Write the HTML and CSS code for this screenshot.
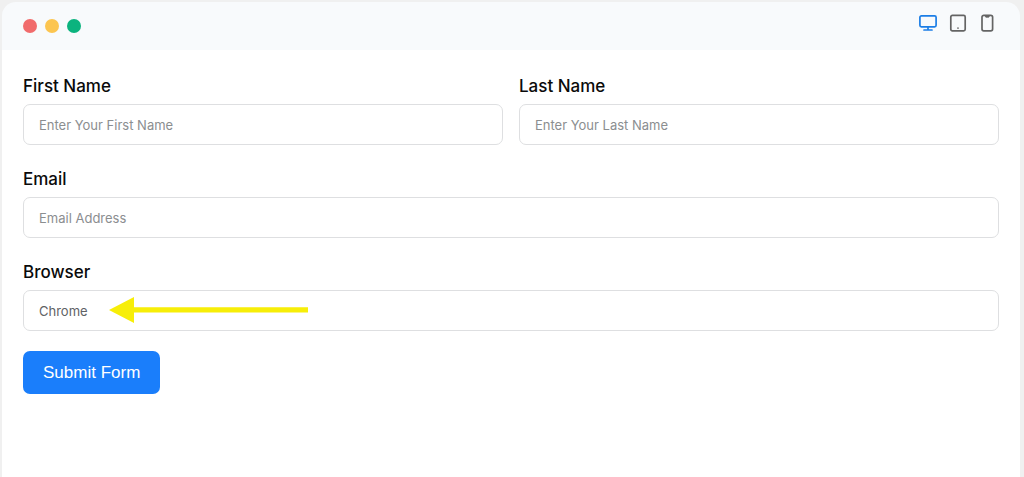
FILE: index.html
```html
<!DOCTYPE html>
<html lang="en">
<head>
<meta charset="utf-8">
<meta name="viewport" content="width=device-width, initial-scale=1">
<title>Form preview</title>
<link rel="stylesheet" href="styles.css">
</head>
<body>
<main class="preview">
  <header class="toolbar">
    <div class="dots" aria-hidden="true">
      <span class="dot dot-red"></span>
      <span class="dot dot-yellow"></span>
      <span class="dot dot-green"></span>
    </div>
    <div class="devices">
      <button class="device device-active" type="button" aria-label="Desktop">
        <svg width="20" height="20" viewBox="0 0 20 20" fill="none" stroke="currentColor" stroke-width="1.7" stroke-linecap="round" stroke-linejoin="round"><rect x="1.9" y="2.8" width="16.2" height="11" rx="1.5"/><path d="M10 14v3M6 17h8"/></svg>
      </button>
      <button class="device" type="button" aria-label="Tablet">
        <svg width="20" height="20" viewBox="0 0 20 20" fill="none" stroke="currentColor" stroke-width="1.7" stroke-linecap="round" stroke-linejoin="round"><rect x="2.8" y="2.3" width="14.4" height="15.6" rx="1.6"/><path d="M10 15v.1"/></svg>
      </button>
      <button class="device" type="button" aria-label="Phone">
        <svg width="20" height="20" viewBox="0 0 20 20" fill="none" stroke="currentColor" stroke-width="1.7" stroke-linecap="round" stroke-linejoin="round"><rect x="4" y="2.3" width="10.6" height="15.6" rx="1.8"/><path d="M7.1 2.8l.7 1.4h3l.7-1.4z" fill="currentColor" stroke-width=".8"/></svg>
      </button>
    </div>
  </header>
  <form class="form">
    <div class="row">
      <div class="field">
        <label class="label" for="first">First Name</label>
        <input class="input" id="first" type="text" placeholder="Enter Your First Name">
      </div>
      <div class="field">
        <label class="label" for="last">Last Name</label>
        <input class="input" id="last" type="text" placeholder="Enter Your Last Name">
      </div>
    </div>
    <div class="field">
      <label class="label" for="email">Email</label>
      <input class="input" id="email" type="email" placeholder="Email Address">
    </div>
    <div class="field">
      <label class="label" for="browser">Browser</label>
      <div class="control">
        <input class="input" id="browser" type="text" value="Chrome">
        <svg class="arrow" width="200" height="26" viewBox="0 0 200 26" aria-hidden="true"><path d="M0 13L25 0v10.2h174v5.2H25V26z" fill="#f7ee08"/></svg>
      </div>
    </div>
    <button class="submit" type="button">Submit Form</button>
  </form>
</main>
</body>
</html>
```
FILE: styles.css
```css
* {
  box-sizing: border-box;
}

body {
  margin: 0;
  background: #f0f0f0;
  font-family: Inter, "Liberation Sans", sans-serif;
}

.preview {
  min-height: 100vh;
  margin: 0 4px 0 2px;
  padding-top: 2px;
}

.toolbar {
  display: flex;
  align-items: center;
  justify-content: space-between;
  height: 48px;
  padding: 0 22px 0 21px;
  background: #f8fafc;
  border-radius: 14px 14px 0 0;
}

.dots {
  display: flex;
  gap: 8px;
}

.dot {
  width: 14px;
  height: 14px;
  border-radius: 50%;
}

.dot-red {
  background: #f16b6c;
}

.dot-yellow {
  background: #fcc550;
}

.dot-green {
  background: #0bb37e;
}

.devices {
  display: flex;
  gap: 10px;
  padding-bottom: 6px;
}

.device {
  display: flex;
  padding: 0;
  border: 0;
  background: none;
  color: #646464;
}

.device-active {
  color: #1c7ee6;
}

.form {
  display: flex;
  flex-direction: column;
  gap: 22px;
  min-height: calc(100vh - 50px);
  padding: 24px 21px;
  background: #fff;
}

.row {
  display: grid;
  grid-template-columns: 1fr 1fr;
  gap: 16px;
}

.field {
  display: flex;
  flex-direction: column;
  gap: 6px;
}

.label {
  color: #0a0a0a;
  font-size: 17px;
  font-weight: 500;
  line-height: 24px;
}

.control {
  position: relative;
}

.input {
  display: block;
  width: 100%;
  height: 41px;
  padding: 0 15px;
  border: 1px solid #dedfe1;
  border-radius: 7px;
  background: #fff;
  color: #606265;
  font: 400 13px/20px Inter, "Liberation Sans", sans-serif;
}

.input::placeholder {
  color: #8b8e90;
  opacity: 1;
}

.arrow {
  position: absolute;
  top: 7px;
  left: 86px;
}

.submit {
  align-self: flex-start;
  height: 43px;
  margin-top: -2px;
  padding: 0 20px;
  border: 0;
  border-radius: 7px;
  background: #1a7efb;
  color: #fff;
  font: 400 17px/24px "Liberation Sans", Arial, sans-serif;
}
```
